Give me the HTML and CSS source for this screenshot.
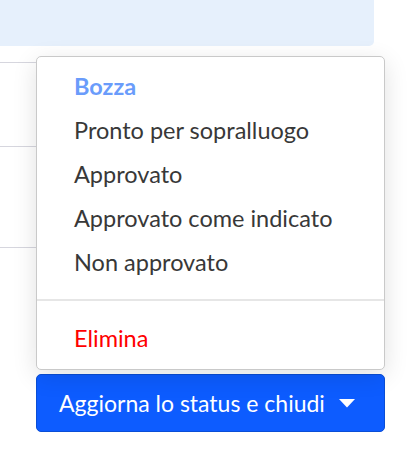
FILE: index.html
```html
<!DOCTYPE html>
<html lang="it">
<head>
<meta charset="utf-8">
<title>Aggiorna status</title>
<link rel="stylesheet" href="styles.css">
</head>
<body>
<div class="page">
  <div class="banner"></div>
  <div class="rows">
    <div class="row row-a"></div>
    <div class="row row-b"></div>
    <div class="row row-c"></div>
  </div>
  <div class="actions">
    <div class="dropdown">
      <ul class="menu">
        <li class="item item-active">Bozza</li>
        <li class="item">Pronto per sopralluogo</li>
        <li class="item">Approvato</li>
        <li class="item">Approvato come indicato</li>
        <li class="item">Non approvato</li>
        <li class="divider"></li>
        <li class="item item-danger">Elimina</li>
      </ul>
      <button class="btn" type="button">
        <span>Aggiorna lo status e chiudi</span>
        <svg class="caret" width="16" height="9" viewBox="0 0 16 9"><path d="M0 0 H16 L8 8.5 Z" fill="#fff"/></svg>
      </button>
    </div>
  </div>
</div>
</body>
</html>
```

FILE: styles.css
```css
html, body {
  margin: 0;
  padding: 0;
  background: #fff;
}
body {
  font-family: Lato, "Noto Sans", sans-serif;
  width: 408px;
  height: 462px;
  overflow: hidden;
}
.page {
  display: flex;
  flex-direction: column;
}
.banner {
  width: 374px;
  height: 46px;
  background: #e6f0fc;
  border-radius: 0 0 5px 0;
}
.rows {
  width: 374px;
  margin-top: 16px;
  display: flex;
  flex-direction: column;
}
.row {
  border-top: 1px solid #d6d6de;
}
.row-a { height: 83px; }
.row-b { height: 100px; }
.row-c { height: 0; }
.actions {
  margin-top: 126px;
  padding-left: 36px;
}
.dropdown {
  position: relative;
  width: 349px;
}
.menu {
  position: absolute;
  left: 0;
  right: 0;
  bottom: calc(100% + 4px);
  margin: 0;
  padding: 7px 0 9px;
  list-style: none;
  background: #fff;
  border: 1px solid #c9c9c9;
  border-radius: 5px;
  box-shadow: 0 6px 24px rgba(0, 0, 0, 0.12);
}
.item {
  padding: 0 37px;
  height: 44px;
  line-height: 44px;
  font-size: 23.5px;
  color: #383838;
  white-space: nowrap;
}
.item-active {
  color: #6a9cfb;
  font-weight: 700;
}
.item-danger {
  color: #ff0000;
}
.divider {
  height: 2px;
  background: #e6e6e6;
  margin: 15px 0 15px;
}
.btn {
  display: flex;
  align-items: center;
  gap: 14px;
  width: 349px;
  height: 58px;
  padding: 0 0 0 22px;
  border: 1px solid #0a4ed6;
  border-radius: 5px;
  background: #0d5cff;
  color: #fff;
  font-family: Lato, "Noto Sans", sans-serif;
  font-size: 23px;
  cursor: pointer;
}
.caret {
  display: block;
  margin-top: 1px;
}
```
